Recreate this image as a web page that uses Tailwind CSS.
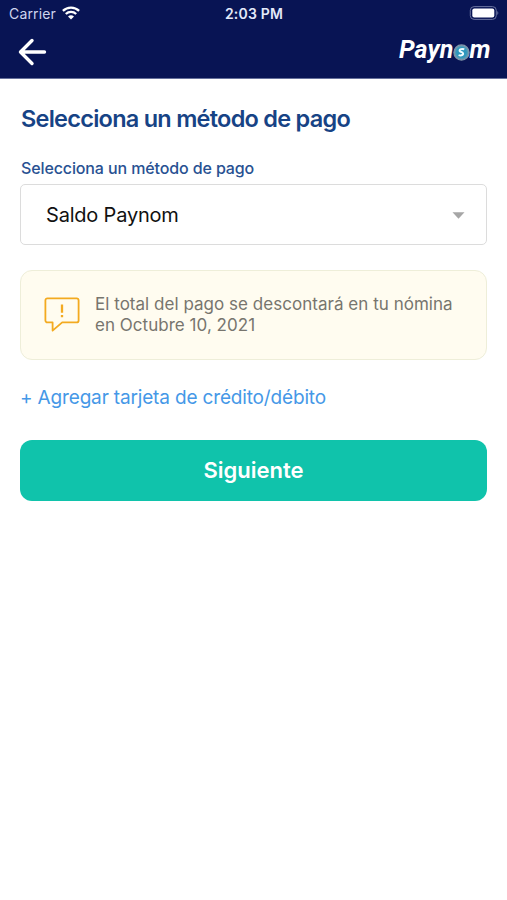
<!DOCTYPE html>
<html lang="es">
<head>
<meta charset="utf-8">
<meta name="viewport" content="width=device-width, initial-scale=1">
<title>Paynom</title>
<script src="https://cdn.jsdelivr.net/npm/@tailwindcss/browser@4"></script>
</head>
<body class="min-h-screen bg-white font-['Inter',sans-serif] whitespace-nowrap">
<header class="h-[79px] bg-[#081454] text-white border-b border-[#66709b]">
  <div class="grid h-[27px] grid-cols-3 items-center pl-[9px] pr-[8px]">
    <div class="flex items-center gap-[6px]">
      <span class="text-[14px] tracking-[0.15px] text-[#cfd5ee]">Carrier</span>
      <svg class="mb-px h-[14px] w-[18px]" viewBox="0 0 18 14" fill="none" stroke="#fff" stroke-width="2.3"><path d="M.9 4.9a11.6 11.6 0 0 1 16.2 0M3.8 8a7.5 7.5 0 0 1 10.4 0"/><path d="M9 13.6 6 10.6a4.3 4.3 0 0 1 6 0Z" fill="#fff" stroke="none"/></svg>
    </div>
    <span class="text-center text-[14px] font-semibold tracking-[0.2px] text-[#e3e9fa]">2:03 PM</span>
    <svg class="mb-px h-[14px] w-[30px] justify-self-end" viewBox="0 0 30 14"><rect x="1.3" y=".6" width="26" height="12.8" rx="3.8" fill="none" stroke="#6b749f"/><rect x="3.3" y="2.6" width="22" height="8.8" rx="2" fill="#fff"/><path d="M28.3 5q2 2 0 4Z" fill="#6b749f"/></svg>
  </div>
  <div class="flex h-[50px] items-center justify-between pl-[18px] pr-[17px]">
    <svg class="h-[28px] w-[29px]" viewBox="0 0 29 28" fill="none" stroke="#fff" stroke-width="3.4" stroke-linecap="round" stroke-linejoin="round"><path d="M26.5 14H2.5M14 2.5 2.5 14 14 25.5"/></svg>
    <div class="mb-[4px] flex items-center font-[Roboto,sans-serif] text-[25px] leading-[28px] font-bold italic">
      <span class="tracking-[0.1px]">Payn</span>
      <svg class="-mr-px mt-[4px] h-[17px] w-[17px]" viewBox="0 0 17 17"><defs><radialGradient id="coin"><stop offset="0" stop-color="#2193bd"/><stop offset=".65" stop-color="#3097bb"/><stop offset="1" stop-color="#7d9fb1"/></radialGradient></defs><circle cx="8.5" cy="8.5" r="7.6" fill="url(#coin)" stroke="#8195a9" stroke-width="1.2"/><path d="M11.3 5.3C7.7 4.3 5.7 6 7 7.4l2.6 1.3c1.7 1.5-.8 3.6-4 2.4" fill="none" stroke="#eefcff" stroke-width="2"/></svg>
      <span class="tracking-[-0.5px]">m</span>
    </div>
  </div>
</header>
<main class="flex flex-col px-[20px] pt-[25px]">
  <h1 class="pl-px text-[23.5px] leading-[30px] font-semibold tracking-[-0.74px] text-[#174385]">Selecciona un método de pago</h1>
  <label class="mt-[23px] pl-px text-[16px] leading-[22px] font-medium tracking-[-0.12px] text-[#285192]">Selecciona un método de pago</label>
  <button type="button" class="mt-[5px] flex h-[61px] items-center justify-between rounded-[5px] border-[1.5px] border-[#dcdcdc] pl-[25px] pr-[21px]">
    <span class="text-[20px] text-[#111] tracking-[-0.2px]">Saldo Paynom</span>
    <svg class="mt-px h-[7px] w-[13px]" viewBox="0 0 13 7"><path d="M.5.3h12L6.5 6.7Z" fill="#a6a6a6"/></svg>
  </button>
  <section class="mt-[25px] flex h-[90px] items-center rounded-[12px] border border-[#eeeed9] bg-[#fffcf0] pl-[23px]">
    <svg class="h-[36px] w-[36px] shrink-0" viewBox="0 0 36 36" fill="none" stroke="#f3aa20" stroke-width="1.8" stroke-linejoin="round"><path d="M3.4 1.4h29.2a2 2 0 0 1 2 2v20a2 2 0 0 1-2 2H18.2l-9.6 8.2v-8.2H3.4a2 2 0 0 1-2-2v-20a2 2 0 0 1 2-2Z"/><path d="M18 7.5v8.3M18 17.9v2.4" stroke-width="2.3"/></svg>
    <p class="ml-[15px] text-[17px] leading-[21px] tracking-[0.03px] text-[#77756e]">El total del pago se descontará en tu nómina<br>en Octubre 10, 2021</p>
  </section>
  <a class="mt-[25px] text-[19px] leading-[26px] tracking-[-0.16px] text-[#4598e7]">+ Agregar tarjeta de crédito/débito</a>
  <button type="button" class="mt-[29px] h-[61px] rounded-[12px] bg-[#10c3ab] text-[22px] font-semibold text-white">Siguiente</button>
</main>
</body>
</html>
